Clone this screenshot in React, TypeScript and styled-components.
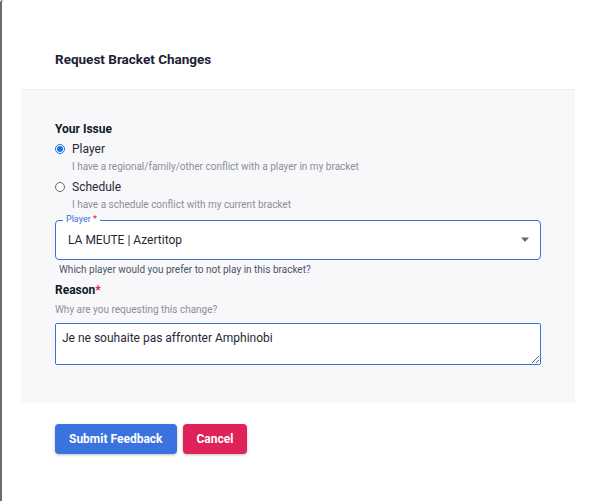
import React, { useState } from "react";
import styled, { createGlobalStyle } from "styled-components";

const GlobalStyle = createGlobalStyle`
  html, body {
    margin: 0;
    padding: 0;
    background: #ffffff;
  }
  body {
    font-family: Roboto, "Noto Sans", "Liberation Sans", sans-serif;
    color: #1a2233;
  }
`;

const Page = styled.div`
  width: 592px;
  height: 501px;
  box-sizing: border-box;
  border-left: 2px solid #6b6b6b;
  border-top-left-radius: 3px;
  background: #fff;
  padding-top: 50px;
`;

const Title = styled.h2`
  margin: 0 0 21px 53px;
  font-size: 13.5px;
  line-height: 18px;
  font-weight: 700;
  color: #1a2233;
`;

const Panel = styled.div`
  margin-left: 19px;
  width: 554px;
  box-sizing: border-box;
  background: #f8f8fa;
  border-top: 1px solid #f1f1f3;
  padding: 31px 34px 38px 34px;
`;

const SectionLabel = styled.div`
  font-size: 12px;
  line-height: 16px;
  font-weight: 700;
  color: #111827;
`;

const Star = styled.span`
  color: #e0203a;
`;

const RadioGroup = styled.div`
  display: flex;
  flex-direction: column;
  margin-top: 2px;
`;

const RadioRow = styled.label`
  display: grid;
  grid-template-columns: 17px 1fr;
  align-items: center;
  cursor: pointer;
`;

const RadioDot = styled.span<{ $checked: boolean }>`
  width: 10px;
  height: 10px;
  border-radius: 50%;
  box-sizing: border-box;
  border: 1px solid ${(p) => (p.$checked ? "#1a73e8" : "#6b6b6b")};
  background: #fff;
  display: flex;
  align-items: center;
  justify-content: center;
  &::after {
    content: "";
    display: ${(p) => (p.$checked ? "block" : "none")};
    width: 6px;
    height: 6px;
    border-radius: 50%;
    background: #1a73e8;
  }
`;

const RadioText = styled.span`
  font-size: 12px;
  line-height: 20px;
  color: #1f2937;
`;

const RadioHint = styled.div`
  grid-column: 2;
  font-size: 10px;
  line-height: 16px;
  color: #8a8f98;
  margin-bottom: 2px;
`;

const Field = styled.div`
  position: relative;
  margin-top: 5px;
`;

const SelectBox = styled.div`
  height: 40px;
  box-sizing: border-box;
  border: 1px solid #3b6fe0;
  border-radius: 4px;
  background: #fff;
  display: flex;
  align-items: center;
  justify-content: space-between;
  padding: 0 10px 0 12px;
  font-size: 12px;
  color: #1f2937;
`;

const Legend = styled.span`
  position: absolute;
  top: -6px;
  left: 8px;
  padding: 0 3px;
  font-size: 9px;
  line-height: 11px;
  color: #3b6fe0;
  background: linear-gradient(to bottom, #f8f8fa 50%, #fff 50%);
`;

const Helper = styled.div<{ $indent?: number; $gap?: number }>`
  font-size: 10px;
  line-height: 14px;
  color: ${(p) => (p.$indent ? "#4b5563" : "#8a8f98")};
  margin: ${(p) => p.$gap ?? 3}px 0 0 ${(p) => p.$indent ?? 0}px;
`;

const ReasonBlock = styled.div`
  margin-top: 5px;
`;

const TextArea = styled.textarea`
  display: block;
  width: 100%;
  height: 42px;
  margin-top: 6px;
  box-sizing: border-box;
  border: 1px solid #3b6fe0;
  border-radius: 2px;
  padding: 6px 6px;
  font-family: Roboto, "Noto Sans", "Liberation Sans", sans-serif;
  font-size: 12px;
  line-height: 16px;
  color: #1f2937;
  background: #fff;
  outline: none;
  resize: vertical;
`;

const Actions = styled.div`
  display: flex;
  gap: 6px;
  margin: 21px 0 0 53px;
`;

const Button = styled.button<{ $tone: "primary" | "danger" }>`
  height: 30px;
  padding: 0 14px;
  border: none;
  border-radius: 4px;
  font-family: Roboto, "Noto Sans", "Liberation Sans", sans-serif;
  font-size: 12px;
  font-weight: 700;
  color: #fff;
  background: ${(p) => (p.$tone === "primary" ? "#3a72e0" : "#e0225a")};
  box-shadow: 0 1px 3px rgba(0, 0, 0, 0.25);
  cursor: pointer;
`;

const Caret = () => (
  <svg width="10" height="6" viewBox="0 0 10 6">
    <path d="M1 0.5h8L5 5z" fill="#6b6b6b" />
  </svg>
);

export default function App() {
  const [issue, setIssue] = useState("player");

  return (
    <>
      <GlobalStyle />
      <Page>
        <Title>Request Bracket Changes</Title>
        <Panel>
          <SectionLabel>Your Issue</SectionLabel>
          <RadioGroup>
            <RadioRow onClick={() => setIssue("player")}>
              <RadioDot $checked={issue === "player"} />
              <RadioText>Player</RadioText>
              <RadioHint>
                I have a regional/family/other conflict with a player in my bracket
              </RadioHint>
            </RadioRow>
            <RadioRow onClick={() => setIssue("schedule")}>
              <RadioDot $checked={issue === "schedule"} />
              <RadioText>Schedule</RadioText>
              <RadioHint>I have a schedule conflict with my current bracket</RadioHint>
            </RadioRow>
          </RadioGroup>
          <Field>
            <Legend>
              Player <Star>*</Star>
            </Legend>
            <SelectBox>
              <span>LA MEUTE | Azertitop</span>
              <Caret />
            </SelectBox>
          </Field>
          <Helper $indent={4}>Which player would you prefer to not play in this bracket?</Helper>
          <ReasonBlock>
            <SectionLabel>
              Reason<Star>*</Star>
            </SectionLabel>
            <Helper $gap={5}>Why are you requesting this change?</Helper>
            <TextArea defaultValue="Je ne souhaite pas affronter Amphinobi" spellCheck />
          </ReasonBlock>
        </Panel>
        <Actions>
          <Button $tone="primary">Submit Feedback</Button>
          <Button $tone="danger">Cancel</Button>
        </Actions>
      </Page>
    </>
  );
}
